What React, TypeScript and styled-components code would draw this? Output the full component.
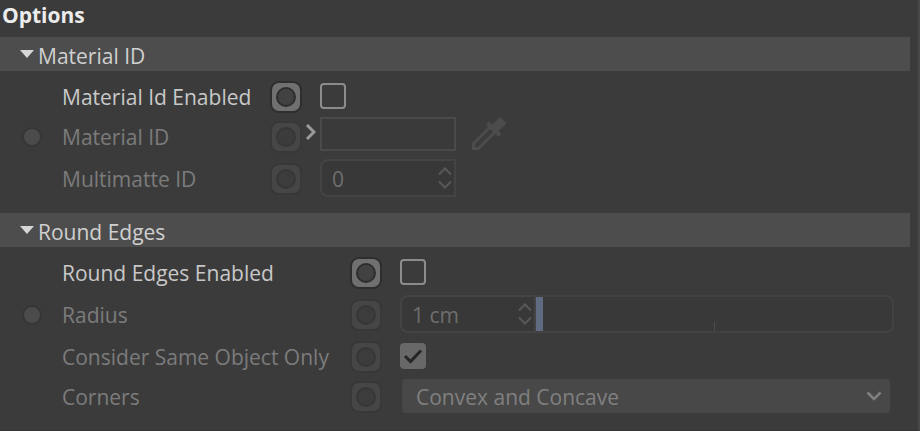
import React, { useId, useState } from "react";
import styled, { createGlobalStyle } from "styled-components";

const GlobalStyle = createGlobalStyle`
  *, *::before, *::after { box-sizing: border-box; }
  body {
    margin: 0;
    background: #3b3b3b;
    color: #c8c8c8;
    font: 21px/28px "Open Sans", "Segoe UI", "Noto Sans", sans-serif;
  }
  button, input, select { font: inherit; color: inherit; }
`;

const Panel = styled.main`
  min-height: 100vh;
  border-right: 2px solid #484848;
  border-bottom: 1px solid #343234;
`;

const Title = styled.h1`
  margin: 0;
  padding: 1px 2px 0;
  height: 37px;
  font-size: 21px;
  line-height: 28px;
  font-weight: 700;
  color: #ececec;
`;

const SectionHeader = styled.h2`
  margin: 0 8px 0 0;
  background: #4d4d4d;
  font-size: 21px;
  font-weight: 400;
`;

const SectionToggle = styled.button`
  display: flex;
  align-items: center;
  gap: 4px;
  width: 100%;
  height: 34px;
  padding: 4px 20px 0;
  border: 0;
  background: none;
  text-align: left;
  color: #d0d0d0;

  svg { margin-bottom: 4px; }
`;

const Rows = styled.div`
  padding: 6px 24px 12px 0;
`;

const Row = styled.div<{ $label: number; $tall?: boolean; $off?: boolean }>`
  display: grid;
  grid-template-columns: 62px ${(p) => p.$label}px 28px 20px minmax(0, 1fr);
  align-items: center;
  height: ${(p) => (p.$tall ? 44 : 40)}px;
  color: ${(p) => (p.$off ? "#7b7b7b" : "#c8c8c8")};
`;

const PortCell = styled.div`
  padding-left: 22px;
`;

const Port = styled.button`
  display: block;
  width: 20px;
  height: 20px;
  padding: 0;
  border: 2px solid #363636;
  border-radius: 50%;
  background: #4b4b4b;
`;

const Label = styled.label`
  white-space: nowrap;
`;

const KeyButton = styled.button<{ $off?: boolean }>`
  display: grid;
  place-items: center;
  width: 28px;
  height: 28px;
  padding: 0;
  border: 0;
  border-radius: 7px;
  background: ${(p) => (p.$off ? "#464646" : "#707070")};
  box-shadow: 0 0 0 2px ${(p) => (p.$off ? "#383838" : "#2e2e2e")};

  &::before {
    content: "";
    width: 20px;
    height: 20px;
    border: 2px solid ${(p) => (p.$off ? "#373737" : "#2e2e2e")};
    border-radius: 50%;
    background: ${(p) => (p.$off ? "#3c3c3c" : "#424242")};
  }
`;

const Control = styled.div<{ $top?: boolean }>`
  display: flex;
  align-items: ${(p) => (p.$top ? "start" : "center")};
  align-self: ${(p) => (p.$top ? "start" : "center")};
  padding-bottom: ${(p) => (p.$top ? 0 : 2)}px;
`;

const Expander = styled.button`
  display: grid;
  place-items: center;
  align-self: start;
  width: 20px;
  height: 30px;
  padding: 0;
  border: 0;
  background: none;
`;

const CheckWrap = styled.span`
  display: grid;
  place-items: center;

  & > * { grid-area: 1 / 1; }
  svg { pointer-events: none; }
`;

const CheckInput = styled.input`
  appearance: none;
  width: 26px;
  height: 26px;
  margin: 0;
  border: 2px solid #8c8c8c;
  border-radius: 4px;

  &:disabled { border-color: #686868; }
  &:disabled:checked { background: #686868; }
`;

const LinkField = styled.input`
  width: 136px;
  height: 34px;
  padding: 0 10px;
  border: 2px solid #4a4a4a;
  border-radius: 0;
  background: #3a3a3a;
`;

const PickButton = styled.button`
  display: grid;
  margin-left: 14px;
  padding: 0;
  border: 0;
  background: none;
`;

const NumberBox = styled.div`
  display: flex;
  align-items: center;
  flex: none;
  width: 136px;
  height: 38px;
  padding-right: 2px;
  border: 2px solid #444444;
  border-radius: 8px 0 0 8px;
  background: #383838;
`;

const NumberInput = styled.input`
  flex: 1;
  min-width: 0;
  height: 34px;
  padding: 2px 0 0 10px;
  border: 0;
  background: none;
  color: #6e6e6e;
`;

const SliderBox = styled.div`
  display: flex;
  flex: 1;
  height: 38px;
  border: 2px solid #424242;
  border-left: 0;
  border-radius: 0 8px 8px 0;
  background: linear-gradient(#4b4d54, #4b4d54) 50% 100% / 1px 9px no-repeat #393939;
`;

const Slider = styled.input`
  appearance: none;
  width: 100%;
  height: 34px;
  margin: 0;
  background: none;

  &::-webkit-slider-thumb {
    appearance: none;
    width: 7px;
    height: 34px;
    border-radius: 0;
    background: #5e6b80;
  }
`;

const SelectWrap = styled.span`
  display: grid;
  flex: 1;
  align-items: center;
  margin: 0 4px 0 2px;

  & > * { grid-area: 1 / 1; }
  svg { justify-self: end; margin-right: 8px; pointer-events: none; }
`;

const Select = styled.select`
  appearance: none;
  width: 100%;
  height: 34px;
  padding: 2px 30px 0 14px;
  border: 0;
  border-radius: 4px;
  background: #484848;

  &:disabled { opacity: 1; color: #808080; }
`;

const Triangle = ({ open }: { open: boolean }) => (
  <svg width="14" height="14" viewBox="0 0 14 14" fill="#d6d6d6">
    <path d={open ? "M0 3h14L7 11z" : "M3 0v14l8-7z"} />
  </svg>
);

const Stepper = () => (
  <svg width="14" height="22" viewBox="0 0 14 22" fill="none" stroke="#585858" strokeWidth="2">
    <path d="M1 7.500 7 1.500l6 6M1 14.500l6 6 6-6" />
  </svg>
);

const Eyedropper = () => (
  <svg width="36" height="34" viewBox="0 0 36 34">
    <path d="M3.500 31.500v-5L20 10l5 5L8.500 31.500z" fill="none" stroke="#4c4c4c" strokeWidth="3" />
    <path
      d="M19 4.500l3 3L28.500 1.500q1.500-1.500 3 0l4 4q1 1 0 2L28.500 14l3 3-3 3L16 7.500z"
      fill="#4c4c4c"
    />
  </svg>
);

type CheckProps = { id: string; checked: boolean; disabled?: boolean; onChange?: () => void };

const Check = ({ id, checked, disabled, onChange }: CheckProps) => (
  <CheckWrap>
    <CheckInput id={id} type="checkbox" checked={checked} disabled={disabled} onChange={onChange} readOnly={!onChange} />
    {checked && (
      <svg width="20" height="18" viewBox="0 0 20 18" fill="none" stroke="#262626" strokeWidth="3">
        <path d="M2 9l5.500 5.500L18 3.500" />
      </svg>
    )}
  </CheckWrap>
);

type PropertyProps = {
  name: string;
  label: number;
  tall?: boolean;
  off?: boolean;
  port?: boolean;
  top?: boolean;
  expander?: React.ReactNode;
  children: (id: string) => React.ReactNode;
};

const Property = ({ name, label, tall, off, port, top, expander, children }: PropertyProps) => {
  const id = useId();
  return (
    <Row $label={label} $tall={tall} $off={off}>
      <PortCell>{port && <Port aria-label={`${name} port`} />}</PortCell>
      <Label htmlFor={id}>{name}</Label>
      <KeyButton $off={off} aria-label={`${name} keyframe`} />
      {expander ?? <span />}
      <Control $top={top}>{children(id)}</Control>
    </Row>
  );
};

const Section = ({ title, children }: { title: string; children: React.ReactNode }) => {
  const [open, setOpen] = useState(true);
  return (
    <section>
      <SectionHeader>
        <SectionToggle aria-expanded={open} onClick={() => setOpen(!open)}>
          <Triangle open={open} />
          {title}
        </SectionToggle>
      </SectionHeader>
      {open && <Rows>{children}</Rows>}
    </section>
  );
};

export default function App() {
  const [materialOn, setMaterialOn] = useState(false);
  const [edgesOn, setEdgesOn] = useState(false);

  return (
    <>
      <GlobalStyle />
      <Panel>
        <Title>Options</Title>
        <Section title="Material ID">
          <Property name="Material Id Enabled" label={210}>
            {(id) => <Check id={id} checked={materialOn} onChange={() => setMaterialOn(!materialOn)} />}
          </Property>
          <Property
            name="Material ID"
            label={210}
            off
            port
            top
            expander={
              <Expander aria-label="Expand Material ID">
                <svg width="12" height="18" viewBox="0 0 12 18" fill="none" stroke="#9a9a9a" strokeWidth="3">
                  <path d="M3 2l7 7-7 7" />
                </svg>
              </Expander>
            }
          >
            {(id) => (
              <>
                <LinkField id={id} disabled />
                <PickButton aria-label="Pick material" disabled>
                  <Eyedropper />
                </PickButton>
              </>
            )}
          </Property>
          <Property name="Multimatte ID" label={210} tall off>
            {(id) => (
              <NumberBox>
                <NumberInput id={id} defaultValue="0" disabled />
                <Stepper />
              </NumberBox>
            )}
          </Property>
        </Section>
        <Section title="Round Edges">
          <Property name="Round Edges Enabled" label={290}>
            {(id) => <Check id={id} checked={edgesOn} onChange={() => setEdgesOn(!edgesOn)} />}
          </Property>
          <Property name="Radius" label={290} tall off port>
            {(id) => (
              <>
                <NumberBox>
                  <NumberInput id={id} defaultValue="1 cm" disabled />
                  <Stepper />
                </NumberBox>
                <SliderBox>
                  <Slider type="range" min={0} max={100} defaultValue={0} aria-label="Radius slider" disabled />
                </SliderBox>
              </>
            )}
          </Property>
          <Property name="Consider Same Object Only" label={290} off>
            {(id) => <Check id={id} checked disabled />}
          </Property>
          <Property name="Corners" label={290} off>
            {(id) => (
              <SelectWrap>
                <Select id={id} disabled>
                  <option>Convex and Concave</option>
                </Select>
                <svg width="16" height="10" viewBox="0 0 16 10" fill="none" stroke="#808080" strokeWidth="2.500">
                  <path d="M1.500 1.500 8 8l6.500-6.500" />
                </svg>
              </SelectWrap>
            )}
          </Property>
        </Section>
      </Panel>
    </>
  );
}
